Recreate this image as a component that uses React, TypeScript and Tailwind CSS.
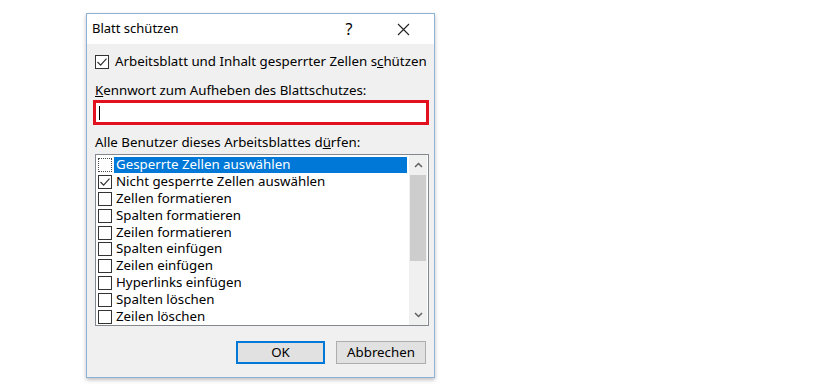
import React from 'react';

const items = [
  { label: 'Gesperrte Zellen auswählen', checked: false, selected: true },
  { label: 'Nicht gesperrte Zellen auswählen', checked: true },
  { label: 'Zellen formatieren' },
  { label: 'Spalten formatieren' },
  { label: 'Zeilen formatieren' },
  { label: 'Spalten einfügen' },
  { label: 'Zeilen einfügen' },
  { label: 'Hyperlinks einfügen' },
  { label: 'Spalten löschen' },
  { label: 'Zeilen löschen' },
];

function Box({ checked, focus }: { checked?: boolean; focus?: boolean }) {
  return (
    <div
      className={`w-[14px] h-[14px] border bg-white flex items-center justify-center shrink-0 ${
        focus ? 'border-dotted border-[#444]' : 'border-[#333]'
      }`}
    >
      {checked && (
        <svg width="12" height="12" viewBox="0 0 12 12">
          <path d="M1.5 6 L4.6 9.2 L10.5 2.6" fill="none" stroke="#333" strokeWidth="1.2" />
        </svg>
      )}
    </div>
  );
}

export default function App() {
  return (
    <div className="w-[820px] h-[390px] bg-white overflow-hidden font-['Noto_Sans',sans-serif] text-[13.3px] text-black">
      <div className="ml-[86px] mt-[13px] w-[349px] h-[365px] border border-[#8eb1d8] shadow-[0_2px_4px_rgba(0,0,0,0.25)] flex flex-col bg-[#f0f0f0]">
        {/* Title bar */}
        <div className="h-[30px] bg-white flex items-center pl-[5px] shrink-0">
          <span className="text-[13px]">Blatt schützen</span>
          <span className="ml-auto w-[30px] text-center text-[16px]">?</span>
          <div className="w-[46px] mr-[8px] flex justify-center ml-[16px]">
            <svg width="13" height="13" viewBox="0 0 13 13">
              <path d="M1 1 L12 12 M12 1 L1 12" stroke="#222" strokeWidth="1.1" />
            </svg>
          </div>
        </div>

        {/* Body */}
        <div className="flex flex-col px-[6px]">
          <div className="flex items-center gap-[6px] mt-[10px] ml-[2px] h-[15px]">
            <Box checked />
            <span>
              Arbeitsblatt und Inhalt gesperrter Zellen s<u>c</u>hützen
            </span>
          </div>

          <div className="mt-[14px] ml-[2px] h-[16px] flex items-center">
            <span>
              <u>K</u>ennwort zum Aufheben des Blattschutzes:
            </span>
          </div>

          <div className="mt-[1px] h-[25px] w-[336px] border-[3px] border-[#e3101d] bg-white flex items-center pl-[3px]">
            <div className="w-px h-[14px] bg-black" />
          </div>

          <div className="mt-[10px] ml-[2px] h-[16px] flex items-center">
            <span>
              Alle Benutzer dieses Arbeitsblattes d<u>ü</u>rfen:
            </span>
          </div>

          <div className="mt-[3px] ml-[2px] w-[334px] h-[172px] border border-[#828790] bg-white flex">
            <div className="flex-1 flex flex-col pl-[2px] pt-[2px]">
              {items.map((it) => (
                <div key={it.label} className="h-[17px] flex items-center gap-[2px]">
                  <Box checked={it.checked} focus={it.selected} />
                  <div
                    className={`flex-1 h-[16px] flex items-center pl-[2px] ${
                      it.selected ? 'bg-[#0078d7] text-white' : ''
                    }`}
                  >
                    {it.label}
                  </div>
                </div>
              ))}
            </div>
            <div className="w-[18px] ml-[2px] mr-[1px] bg-[#f0f0f0] flex flex-col">
              <div className="h-[20px] flex items-center justify-center">
                <svg width="9" height="6" viewBox="0 0 9 6">
                  <path d="M1 5 L4.5 1.5 L8 5" fill="none" stroke="#606060" strokeWidth="1.5" />
                </svg>
              </div>
              <div className="h-[86px] mx-[1px] bg-[#cdcdcd]" />
              <div className="flex-1" />
              <div className="h-[20px] flex items-center justify-center">
                <svg width="9" height="6" viewBox="0 0 9 6">
                  <path d="M1 1 L4.5 4.5 L8 1" fill="none" stroke="#606060" strokeWidth="1.5" />
                </svg>
              </div>
            </div>
          </div>

          <div className="mt-[15px] flex justify-end gap-[11px] pr-[2px]">
            <button className="w-[89px] h-[23px] border-2 border-[#0078d7] bg-[#e1e1e1]">
              OK
            </button>
            <button className="w-[90px] h-[23px] border border-[#adadad] bg-[#e1e1e1]">
              Abbrechen
            </button>
          </div>
        </div>
      </div>
    </div>
  );
}
